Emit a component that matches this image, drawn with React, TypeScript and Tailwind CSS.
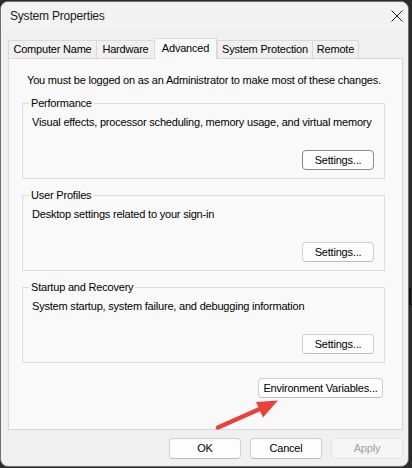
const tabs = [
    { label: "Computer Name", width: "w-[88px]" },
    { label: "Hardware", width: "w-[58px]" },
    { label: "Advanced", width: "w-[63px]", active: true },
    { label: "System Protection", width: "w-[95px]" },
    { label: "Remote", width: "w-[47px]" },
];

const groups = [
    { title: "Performance", text: "Visual effects, processor scheduling, memory usage, and virtual memory", focused: true },
    { title: "User Profiles", text: "Desktop settings related to your sign-in" },
    { title: "Startup and Recovery", text: "System startup, system failure, and debugging information" },
];

const GroupBox = ({ title, text, focused }: { title: string; text: string; focused?: boolean }) => (
    <fieldset className="border border-[#dcdcdc] pl-[6px] pr-[10px] pb-[8px]">
        <legend className="px-[2px] leading-[14px]">{title}</legend>
        <p className="mt-[5px] pl-[3px] leading-[14px]">{text}</p>
        <div className="mt-[21px] flex justify-end">
            <button
                className={`w-[72px] h-[20px] rounded-[4px] border bg-[#fdfdfd] ${focused ? "border-[#8a8a8a]" : "border-[#d0d0d0] border-b-[#bcbcbc]"}`}
            >
                Settings...
            </button>
        </div>
    </fieldset>
);

const App = () => {
    return (
        <div
            className="relative w-[412px] h-[468px] overflow-hidden bg-[#2b2b2b] text-[11px] text-black tracking-[-0.2px]"
            style={{ fontFamily: '"Liberation Sans", Arial, sans-serif' }}
        >
            <div className="mt-[1px] w-[409px] h-[466px] rounded-[8px] border border-[#6f6f6f] bg-[#f0f0f0] flex flex-col overflow-hidden">
                {/* title bar */}
                <div className="h-[28px] shrink-0 bg-[#f3f3f3] flex items-center justify-between pl-[9px] pr-[1px]">
                    <span className="text-[12px] text-[#1a1a1a]">System Properties</span>
                    <svg width="20" height="20" viewBox="0 0 20 20">
                        <path d="M4.5 4.5 L15.5 15.5 M15.5 4.5 L4.5 15.5" stroke="#1a1a1a" strokeWidth="1" />
                    </svg>
                </div>

                {/* tabs */}
                <div className="relative z-10 mt-[8px] ml-[7px] h-[21px] flex items-end">
                    {tabs.map(({ label, width, active }, i) => (
                        <div
                            key={label}
                            className={`${width} flex items-center justify-center border-t border-l border-[#d9d9d9] ${i === tabs.length - 1 ? "border-r" : ""} ${active ? "h-[21px] bg-[#f9f9f9] border-r pb-[2px]" : "h-[18px] mb-[1px] bg-[#f0f0f0]"}`}
                        >
                            {label}
                        </div>
                    ))}
                </div>

                {/* panel */}
                <div className="-mt-px ml-[7px] w-[395px] h-[372px] shrink-0 border border-[#d9d9d9] bg-[#f9f9f9] pt-[14px] pl-[13px] pr-[17px] flex flex-col">
                    <p className="pl-[5px] leading-[14px]">You must be logged on as an Administrator to make most of these changes.</p>
                    <div className="mt-[9px] flex flex-col gap-[9px]">
                        {groups.map((g) => (
                            <GroupBox key={g.title} {...g} />
                        ))}
                    </div>
                    <div className="mt-[15px] flex justify-end">
                        <button className="mr-[2px] w-[125px] h-[20px] rounded-[4px] border border-[#d0d0d0] border-b-[#bcbcbc] bg-[#fdfdfd]">
                            Environment Variables...
                        </button>
                    </div>
                </div>

                {/* footer buttons */}
                <div className="mt-[8px] flex justify-end gap-[9px] pr-[5px]">
                    <button className="w-[72px] h-[21px] rounded-[4px] border border-[#d0d0d0] border-b-[#bcbcbc] bg-[#fdfdfd]">OK</button>
                    <button className="w-[72px] h-[21px] rounded-[4px] border border-[#d0d0d0] border-b-[#bcbcbc] bg-[#fdfdfd]">Cancel</button>
                    <button className="w-[72px] h-[21px] rounded-[4px] border border-[#e3e3e3] bg-[#f6f6f6] text-[#a0a0a0]">Apply</button>
                </div>
            </div>

            {/* background window edge peeking out */}
            <div className="absolute right-0 top-[288px] w-[3px] h-[17px] border-l-2 border-y border-[#111]" />

            {/* red annotation arrow */}
            <svg className="absolute left-0 top-0 pointer-events-none" width="412" height="468" viewBox="0 0 412 468">
                <line x1="218" y1="427.5" x2="262" y2="408" stroke="#e8413a" strokeWidth="4.5" strokeLinecap="round" />
                <polygon points="278,400.5 256,402 263,417.5" fill="#e8413a" />
            </svg>
        </div>
    );
};

export default App;
